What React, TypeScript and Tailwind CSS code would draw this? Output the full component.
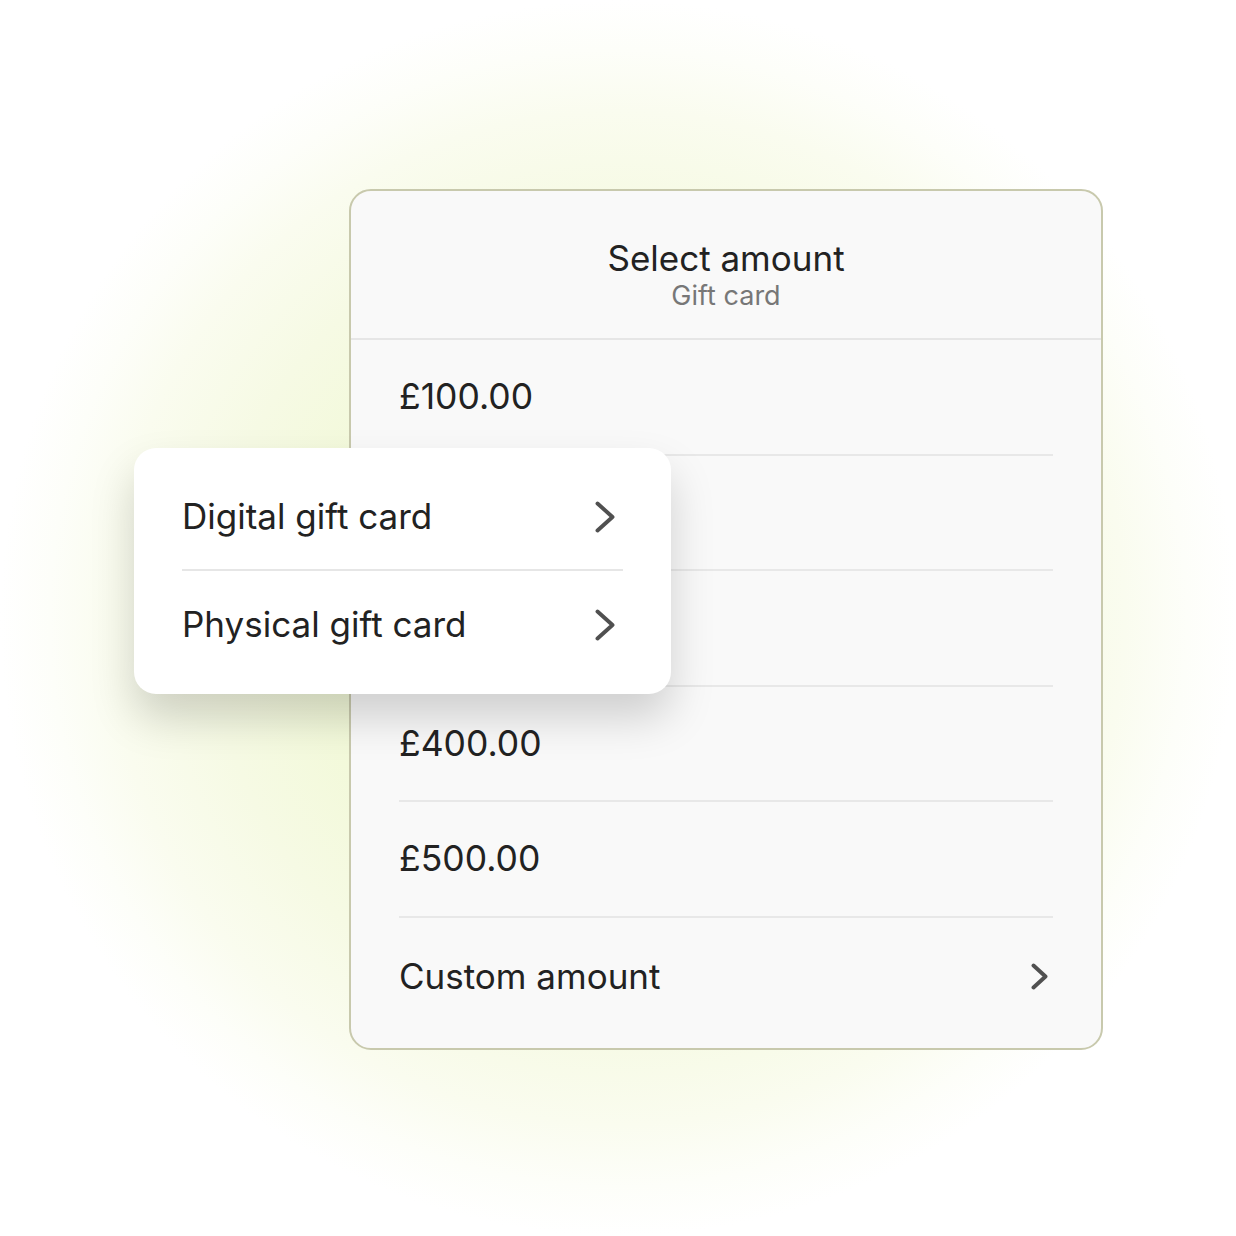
const amounts = ["£100.00", "£200.00", "£300.00", "£400.00", "£500.00"];

function Chevron({ w, h }: { w: number; h: number }) {
  return (
    <svg width={w} height={h} viewBox={`0 0 ${w} ${h}`} fill="none" className="shrink-0">
      <polyline
        points={`2.5,2.5 ${w - 2.5},${h / 2} 2.5,${h - 2.5}`}
        stroke="#505050"
        strokeWidth={3.9}
        strokeLinecap="round"
        strokeLinejoin="round"
      />
    </svg>
  );
}

export default function App() {
  return (
    <div
      className="relative h-[1236px] w-[1236px] overflow-hidden bg-[radial-gradient(circle_closest-side_at_50%_50%,#eff8cf_0%,#f2f9d8_45%,#f6fae4_66%,#fafcef_82%,#fdfef9_92%,#ffffff_100%)] pt-[189px] pl-[349px] text-[#222222]"
      style={{ fontFamily: "Inter, 'Noto Sans', sans-serif" }}
    >
      <section className="flex w-[754px] flex-col rounded-[22px] border-2 border-[#c8c9ad] bg-[#f9f9f9]">
        <header className="flex h-[149px] flex-col items-center border-b-2 border-[#e6e6e6] pt-[44px]">
          <h1 className="text-[35px] leading-[46px] font-normal">Select amount</h1>
          <p className="text-[27px] leading-[30px] text-[#777777]">Gift card</p>
        </header>

        <ul className="flex flex-col px-[48px]">
          {amounts.map((a) => (
            <li
              key={a}
              className="flex h-[115.5px] items-center border-b-2 border-[#e8e8e8] text-[35.5px]"
            >
              {a}
            </li>
          ))}
          <li className="flex h-[118px] items-center justify-between text-[35px]">
            <span>Custom amount</span>
            <span className="mr-[5px]">
              <Chevron w={17} h={27} />
            </span>
          </li>
        </ul>
        <div className="h-[12px]" />
      </section>

      <div className="absolute top-[448px] left-[134px] flex w-[537px] flex-col rounded-[22px] bg-white px-[48px] py-[16px] shadow-[0_24px_44px_rgba(0,0,0,0.17)]">
        <div className="flex h-[107px] items-center justify-between border-b-2 border-[#e6e6e6] text-[35px]">
          <span>Digital gift card</span>
          <span className="mr-[8px]">
            <Chevron w={20} h={32} />
          </span>
        </div>
        <div className="flex h-[107px] items-center justify-between text-[35px]">
          <span>Physical gift card</span>
          <span className="mr-[8px]">
            <Chevron w={20} h={32} />
          </span>
        </div>
      </div>
    </div>
  );
}
